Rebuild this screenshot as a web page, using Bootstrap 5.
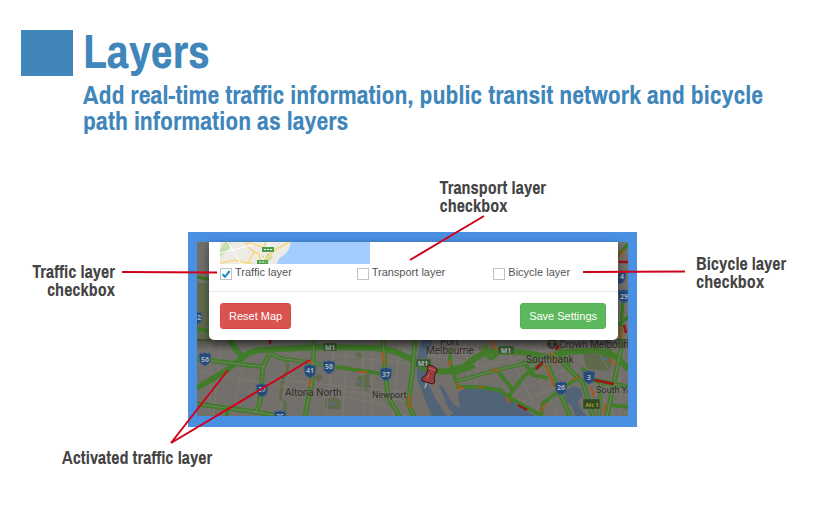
<!DOCTYPE html>
<html lang="en">
<head>
<meta charset="utf-8">
<meta name="viewport" content="width=device-width, initial-scale=1">
<title>Layers</title>
<link href="https://cdn.jsdelivr.net/npm/bootstrap@5.3.0/dist/css/bootstrap.min.css" rel="stylesheet">
<style>
body{font-family:"Liberation Sans Narrow","Archivo Narrow","Arial Narrow","Liberation Sans",sans-serif;font-weight:700;color:#444;background:#fff}
.slide-head{padding:30px 21px 0;gap:10px;color:#4086bb}
.swatch{width:52px;height:46px;background:#4086bb}
.slide-title{font-size:48px;line-height:42px;font-weight:700}
.slide-sub{font-size:26px;line-height:26px;font-weight:700;margin-top:10px}
.callouts{display:grid;grid-template-columns:188fr 449fr 187fr;margin-top:45px;font-size:18px;line-height:18px}
.note-top{grid-column:2;margin:0 0 17px 56%}
.note-left{grid-column:1;padding:31px 73px 0 0}
.note-right{padding:23px 0 0 59px}
.note-bottom{grid-column:1 / 3;padding:22px 0 0 62px}
.shot{border:10px solid #4a90e2;border-width:10px 9px 11px;font-family:"Liberation Sans",Arial,sans-serif;font-weight:400}
.map-view{inset:0;width:100%;height:100%}
.arrows{left:-9px;top:-10px;width:calc(100% + 18px);height:calc(100% + 21px);overflow:visible;pointer-events:none;z-index:2}
.map-holder{padding:0 10px 76px 12px}
.dialog{background:#fff;border-radius:0 0 5px 5px;box-shadow:0 3px 9px rgba(0,0,0,.5);font-size:11px;line-height:16px;color:#555}
.dialog-body{padding:0 12px 11px 11px;border-bottom:1px solid #e8e8e8}
.dialog-foot{padding:11px 12px 11px 11px}
.preview{width:150px;height:22px}
.layer-row label{margin-left:3px}
.tick{appearance:none;width:12px;height:12px;margin:4px 0 0;border:1px solid #bfc3c7;background:#fff;flex:none}
.tick:checked{background:#fff url("data:image/svg+xml,%3Csvg xmlns='http://www.w3.org/2000/svg' viewBox='0 0 10 10'%3E%3Cpath d='M1.5 5.2 4 7.8 8.7 2' fill='none' stroke='%231e8cbe' stroke-width='2'/%3E%3C/svg%3E") center/10px no-repeat}
.act{--bs-btn-font-size:11px;--bs-btn-padding-x:8px;--bs-btn-padding-y:4px;--bs-btn-border-radius:3px;--bs-btn-color:#fff;line-height:16px}
.act-reset{--bs-btn-bg:#d9534f;--bs-btn-border-color:#d64b47}
.act-save{--bs-btn-bg:#5cb85c;--bs-btn-border-color:#55b355}
</style>
<script src="https://cdn.jsdelivr.net/npm/bootstrap@5.3.0/dist/js/bootstrap.bundle.min.js"></script>
</head>
<body>
<header class="slide-head d-flex align-items-start">
  <div class="swatch flex-shrink-0"></div>
  <div>
    <h1 class="slide-title m-0">Layers</h1>
    <p class="slide-sub mb-0">Add real-time traffic information, public transit network and bicycle path information as layers</p>
  </div>
</header>
<main class="callouts">
  <div class="note-top">Transport layer<br>checkbox</div>
  <div class="note-left text-end">Traffic layer<br>checkbox</div>
  <section class="shot position-relative">
    <svg class="map-view position-absolute" viewBox="197 242 431 174" preserveAspectRatio="xMidYMax slice" aria-label="Traffic map">
      <defs>
        <g id="shield"><path d="M-5-6Q-3-5 0-6.500Q3-5 5-6L6-3Q5 0 5.500 2Q5 5 0 7Q-5 5-5.500 2Q-5 0-6-3Z" fill="#264b78" stroke="#4c6888" stroke-width=".6"/></g>
        <linearGradient id="dim" x1="0" x2="0" y1="0" y2="1"><stop stop-color="#000" stop-opacity=".3"/><stop offset="1" stop-color="#000" stop-opacity="0"/></linearGradient>
      </defs>
      <path fill="#73706b" d="M197 242h431v174H197z"/>
      <path fill="#5f6a4d" d="M197 283h14v60h-14zM583 349l30 7-3 15-24-2zM318 373l5 4-4 5-4-4zM357 377l12-3v9l2 5-5 3-10-5zM325 399l10-2 6 4-1 8h-14zM357 352l6 2-3 6-5-3zM475 346l20 2-10 8z"/>
      <g fill="none" stroke="#5f6c4c" stroke-width="3"><path d="M282 356q9 8 4 17t-4 16q-4 9 4 15l-2 12M479 397l-5 8"/></g>
      <!-- minor streets -->
      <g stroke="#7f7b74" stroke-width=".8" fill="none"><path d="M197 342h140l150 22M197 371l180 32 30 13M210 340v76M222 340l-9 76M244 360l-12 56M296 345l-18 71M335 340l-9 76M347 340l-4 76M362 340l2 76M373 340l-1 76M400 340l-7 76M335 355l78 9M335 389l72 12M270 379l135 13M465 340l5 47M478 340l-2 47M444 360l46 8M502 340l38 76M520 340l38 76M535 340l38 76M486 366l80-21M510 396l55-27M515 405l65-29M555 340l33 76M570 340l44 76M590 340l38 58M620 242v174M618 260l10 8M618 310l10-6M590 399l38-25M595 410l33-26"/></g>
      <!-- river and bay -->
      <path fill="#506377" d="M422 339h11l-6 19-1 20 9 20 12 18h-15l-6-14-9-24v-20zM458 392l9-4 30 2 10 8 28 18h-85l5-5 5-4zM439 385l4 2 10 17 9 6-4 5-9-5zM565 391l9-5 7 3 2 7-5 6 4 9 5 5h-12l-3-10-7-6z"/>
      <path d="M236 394q10 2 15 6M600 358l8 2M357 380l5 5M328 405l4-3 4 3" stroke="#56718a" stroke-width="1.500" fill="none"/>
      <!-- traffic roads -->
      <g fill="none" stroke="#427c2a" stroke-linejoin="round">
        <path stroke-width="6" d="M197 388l30-18 15-12q7-7 20-8l61-3 50 1q18 1 30 7t16 10 18 6q8 1 13 0l13-4 14-10q6-4 13-5h30l27 5 20-5 30-2 20 7 11 12M230 338q2 9 12 18"/>
        <path stroke-width="5" d="M197 359l68 8M270 353l-7 14-3 36-5 10M314 340l-2 42-7 34M197 404l66 9 24 5M383 339l2 28 3 30 12 20M415 339l-2 28-5 36 6 14M547 364l23 52M553 353l30 30 10 33M623 339l-16 77M582 368l11 12 35 7"/>
        <path stroke-width="4" d="M271 353q8 7 23 7l30 5 59 9M227 410v8M450 350v12l8 25h22l20 3 8 7 34 19M457 381l40-11 30-7 12-3M497 370l16 20M508 397l17-22 18-12M541 416l2-13 34-25M455 373l20-7M523 361l10 14 15 3M606 348l22 20M601 382l-2 34M610 405l18 2M486 345q-1 8 4 13 5 1 7-6M556 343l14 23"/>
      </g>
      <g fill="none" stroke="#74806a" stroke-width="1"><path d="M197 359l68 8M270 353l-7 14-3 36-5 10M271 353q8 7 23 7l30 5M314 340l-2 42-7 34M197 404l66 9 24 5M383 339l2 28 3 30 12 20M415 339l-2 28-5 36 6 14M547 364l23 52M553 353l30 30 10 33M623 339l-16 77M593 380l35 7M601 382l-2 34M457 381l40-11 30-7"/></g>
      <g fill="none" stroke="#37781f" stroke-width="3"><path d="M197 277l14 3M197 329l13 2M618 256l10-12M618 291l10 3M623 300l-3 42M618 325l10-8"/></g>
      <g fill="none" stroke="#ad561b" stroke-width="2"><path d="M311 360v10M310 379v8M383 352l1 13M358 372h9M450 360v6M410 395l-2 10 4 3M457 382l2 6h5M478 387h5M493 341q-2 8 7 9M492 370l7 1M546 365l8 22M551 352l6 12M506 397l4 6M545 404l-4 8M591 387l3 10M606 404l-3 10M573 380l5-3M618 258l6-8M620 339l2-12M610 359l6 6"/></g>
      <g fill="none" stroke="#9b1218" stroke-width="2.500"><path d="M270 338v6M536 369l7-7M518 405l9 5M594 380l20 4M556 350l3-5M619 262h9M624 325l2 8"/></g>
      <!-- route markers -->
      <g font-family="Noto Sans,sans-serif" font-size="7" font-weight="700" text-anchor="middle" fill="#a9b1bb">
        <use href="#shield" x="205" y="359"/><text x="205" y="362">56</text>
        <use href="#shield" x="310" y="371"/><text x="310" y="373">41</text>
        <use href="#shield" x="329" y="367"/><text x="329" y="369">56</text>
        <use href="#shield" x="262" y="390"/><text x="262" y="392">37</text>
        <use href="#shield" x="280" y="417"/><text x="280" y="419">35</text>
        <use href="#shield" x="386" y="374"/><text x="386" y="377">37</text>
        <use href="#shield" x="561" y="388"/><text x="561" y="390">26</text>
        <use href="#shield" x="589" y="377"/><text x="589" y="380">3</text>
        <use href="#shield" x="620" y="277"/><text x="622" y="279">4</text>
        <use href="#shield" x="624" y="296"/><text x="624" y="299">29</text>
        <use href="#shield" x="196" y="318"/><text x="199" y="320">2</text>
        <g fill="#36582d" stroke="#65785a" stroke-width=".5"><path d="M323 343h14v8h-14zM416 359h15v8h-15zM498 346h16v8h-16z"/><path fill="#304c1e" d="M583 399h17v10h-17z"/></g>
        <text x="330" y="350">M1</text><text x="423" y="366">M1</text><text x="506" y="353">M1</text><text x="592" y="407" font-size="6" fill="#a69a35">Alt 1</text>
      </g>
      <g font-family="Roboto,sans-serif" font-size="10" fill="#2f2b28" stroke="#837f7a" stroke-opacity=".4" stroke-width="1.500" paint-order="stroke">
        <text x="285" y="396">Altona North</text><text x="372" y="398" font-size="9">Newport</text><text x="440" y="345">Port</text><text x="426" y="354">Melbourne</text><text x="526" y="363">Southbank</text><text x="559" y="348">Crown Melbourne</text><text x="596" y="393" font-size="9">South Yarra</text>
      </g>
      <circle cx="552" cy="344" r="5" fill="#423c38"/><path d="M549 342h6M552 342v5" stroke="#837f7a"/>
      <!-- pushpin -->
      <path d="M427 381l-2 7" stroke="#aaa" stroke-width="1.500"/><path d="M427 366q5-2 10 3l0 3-2 1-1 6 1 3-2 2-11-3v-3l4-3 2-6z" fill="#983c40" stroke="#371719"/><path d="M428 368l7 2M429 374l-2 5" stroke="#bd6566" fill="none"/>
      <path fill="url(#dim)" d="M197 339h431v12H197z"/>
    </svg>
    <div class="map-holder position-relative">
      <div class="dialog position-relative">
        <div class="dialog-body">
          <svg class="preview d-block" viewBox="0 0 150 22" aria-hidden="true"><path fill="#eeebe5" d="M0 0h150v22H0z"/><path fill="#a3ccff" d="M71 0h79v22H57q1-6 7-9 5-3 7-13z"/><path d="M0 7l5-7h6l-2 7-9 8zM42 14l8-3 3 5-7 5z" fill="#c7dfae"/><g fill="none" stroke="#f8d77d" stroke-width="1.500"><path d="M25 0l5 7 9 5 2 10M70 0l-8 4q-13 6-17 18M34 10l-7 12M0 21l14-3 18 4M45 0l1 22M27 0l18 6"/></g><g fill="none" stroke="#fff"><path d="M0 11l33-8M8 0l13 22M50 0l-8 22"/></g><g fill="#4d9e4a"><path d="M42 5h12v5H42zM37 18h11v4H37z"/></g><path d="M44 7.500h8M39 20h7" stroke="#fff" stroke-dasharray="2 1"/></svg>
          <div class="row g-0 layer-row">
            <div class="col-4 d-flex"><input class="tick" id="traffic" type="checkbox" checked><label for="traffic">Traffic layer</label></div>
            <div class="col-4 d-flex"><input class="tick ms-2" id="transport" type="checkbox"><label for="transport">Transport layer</label></div>
            <div class="col-4 d-flex"><input class="tick ms-3" id="bicycle" type="checkbox"><label for="bicycle">Bicycle layer</label></div>
          </div>
        </div>
        <div class="dialog-foot d-flex justify-content-between">
          <button class="btn act act-reset" type="button">Reset Map</button>
          <button class="btn act act-save" type="button">Save Settings</button>
        </div>
      </div>
    </div>
    <svg class="arrows position-absolute" viewBox="188 232 449 195" aria-hidden="true"><g fill="none" stroke="#d0021b" stroke-width="2"><path d="M122 272l95 .5M484 216l-74 44M583 272l102-.5M228 370l-57 73 139-83"/></g></svg>
  </section>
  <div class="note-right">Bicycle layer<br>checkbox</div>
  <div class="note-bottom">Activated traffic layer</div>
</main>
</body>
</html>
